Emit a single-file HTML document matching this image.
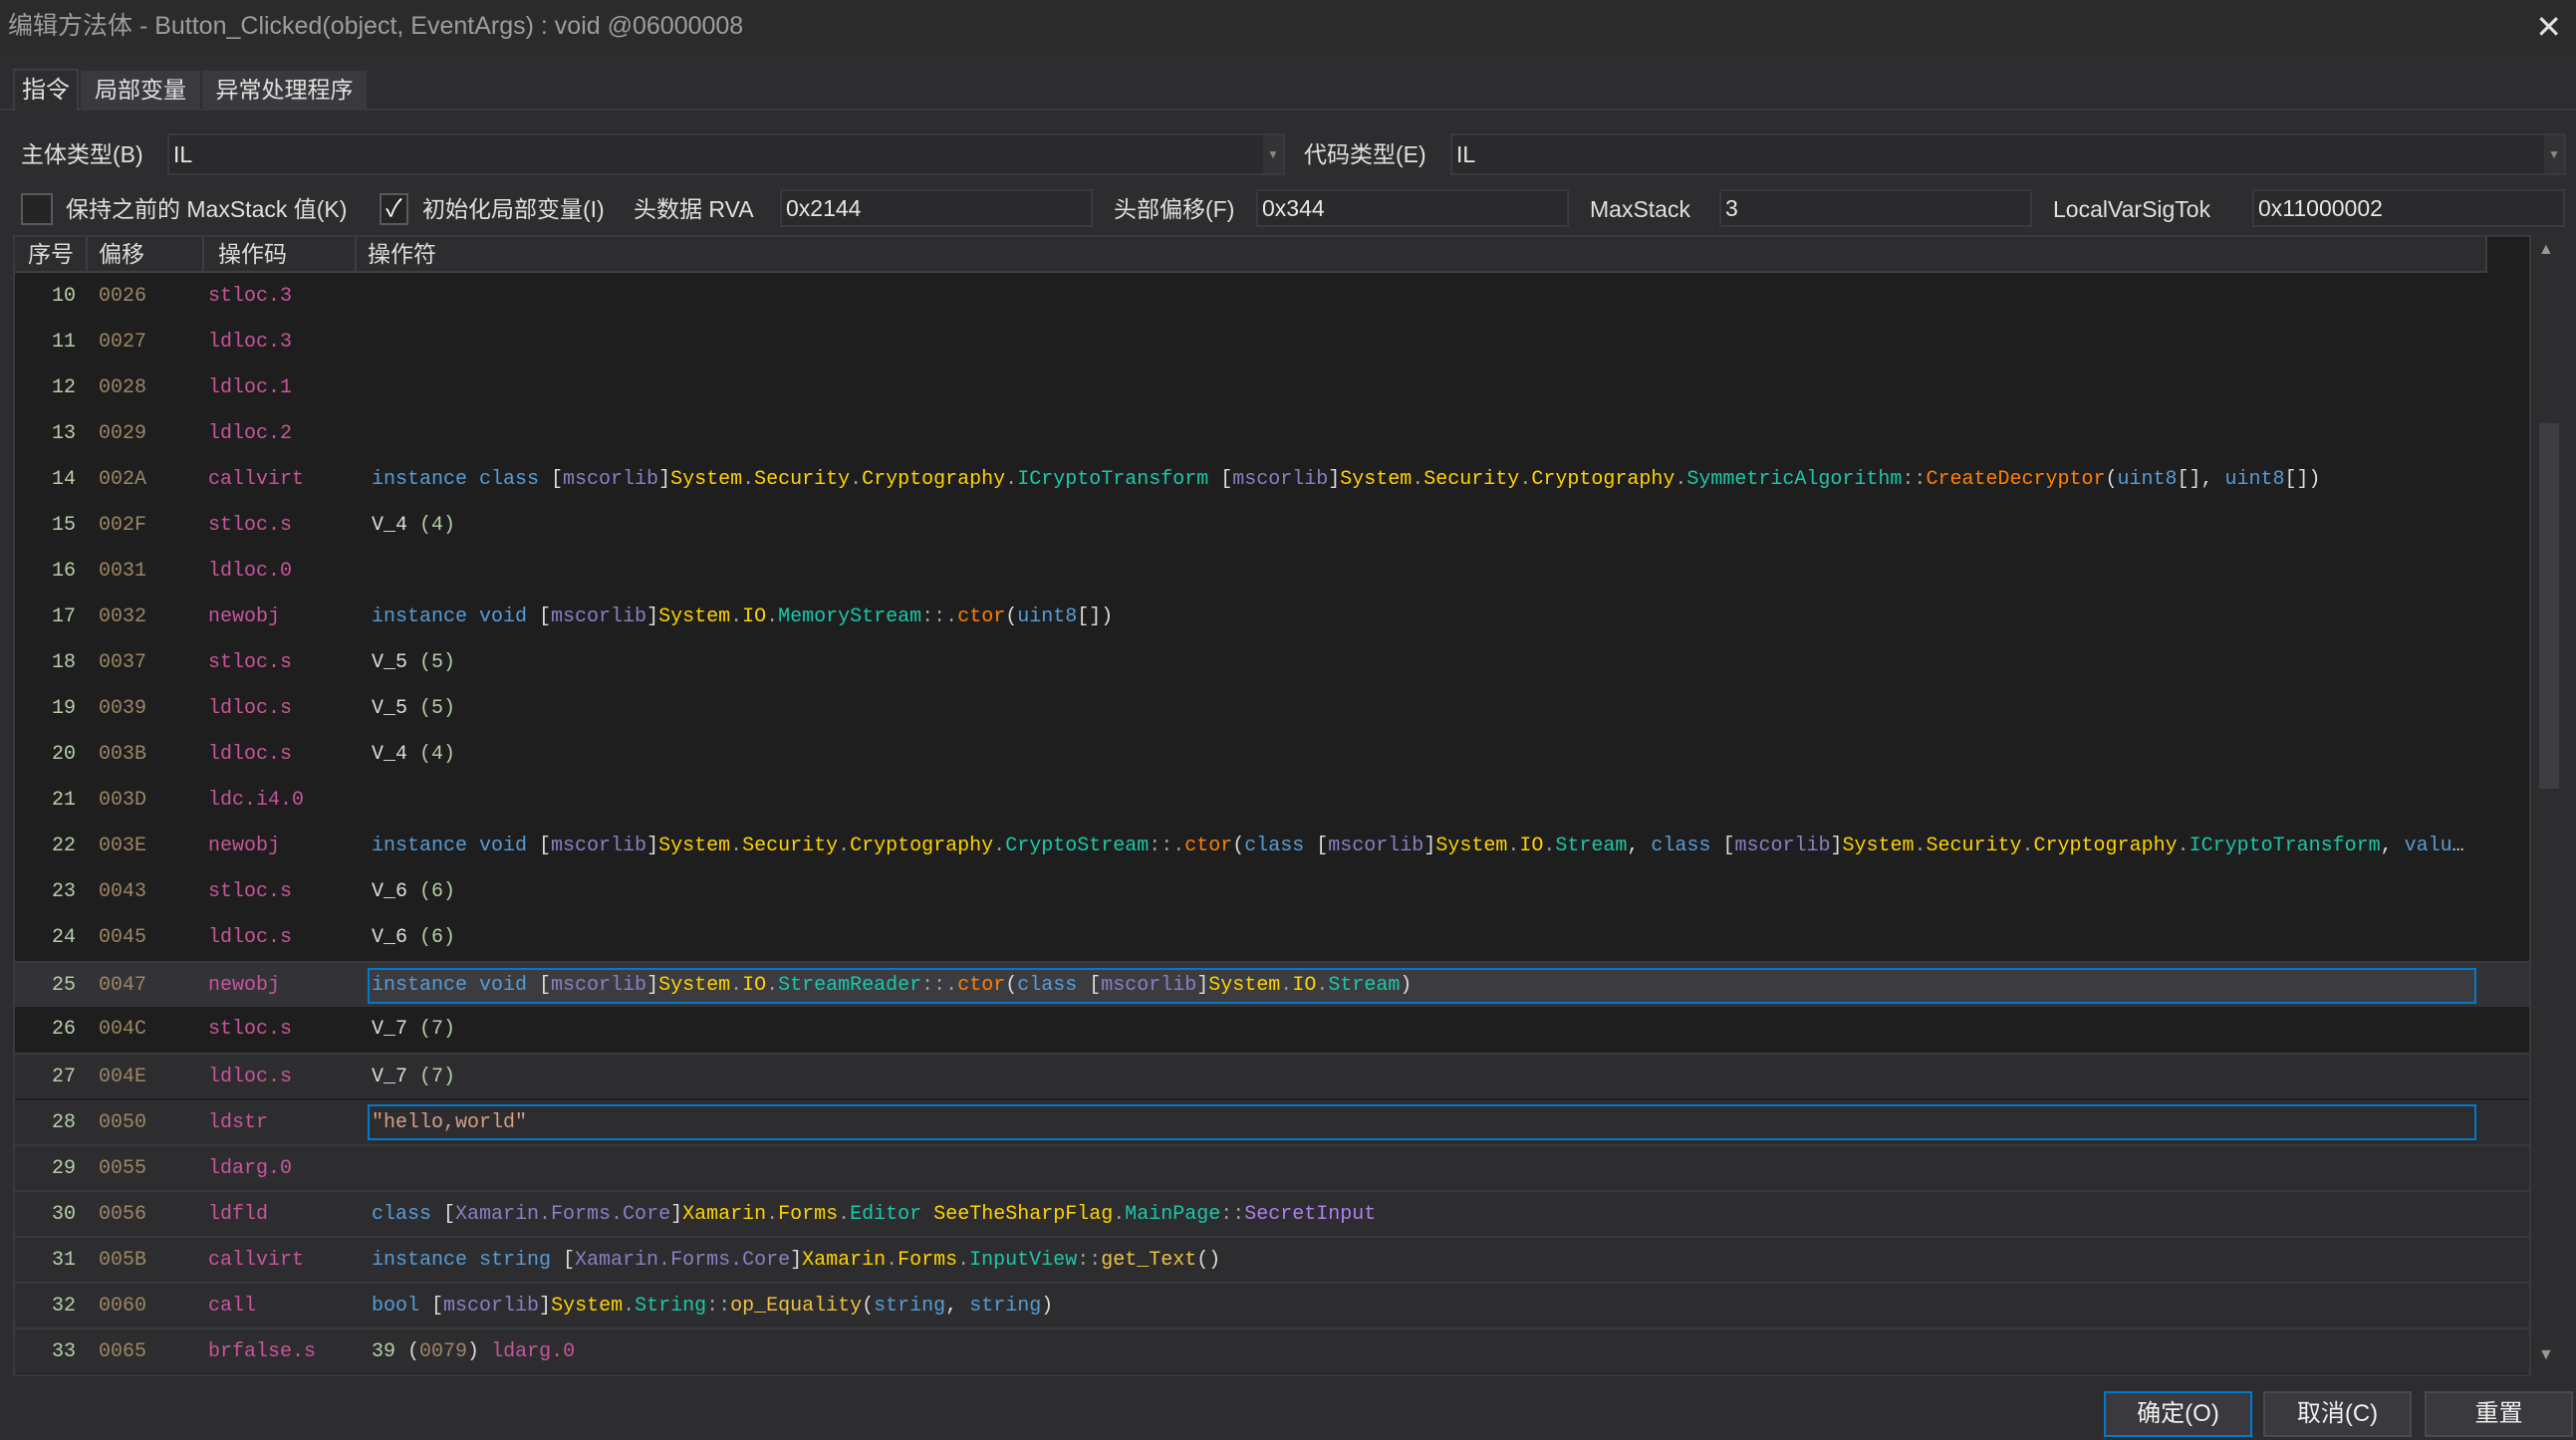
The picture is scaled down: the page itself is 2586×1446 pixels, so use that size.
<!DOCTYPE html>
<html><head><meta charset="utf-8"><style>
*{margin:0;padding:0;box-sizing:border-box}
body{width:2586px;height:1446px;background:#2d2d30;position:relative;overflow:hidden;font-family:"Liberation Sans","Noto Sans CJK SC",sans-serif;color:#dcdcdc}
.abs{position:absolute}
.title{left:0;top:0;width:2586px;height:56px;background:#2b2b2c;color:#9d9d9d;font-size:25px;line-height:52px;padding-left:8px}
.lbl{font-size:23px;color:#e0e0e0;line-height:40px;white-space:nowrap}
.inp{background:#2a2a2c;border:2px solid #3a3a3e;font-size:23px;color:#e6e6e6;line-height:34px;padding-left:4px}
.cb{border:2px solid #5a5a5e;background:#252526}
.grid{left:13px;top:236px;width:2528px;height:1146px;background:#1e1e1e;border:2px solid #3a3a3c}
.hdr{left:15px;top:238px;width:2482px;height:36px;background:#2d2d30;border-bottom:2px solid #3e3e42;font-size:23px;line-height:34px}
.row{position:absolute;left:15px;width:2524px;height:46px;font-family:"Liberation Mono",monospace;font-size:20px;line-height:46px;white-space:pre}
.alt{background:#2d2d30;border-top:2px solid #3a3a3c}
.c1{position:absolute;right:2463px;color:#b5cea8}
.c2{position:absolute;left:84px;color:#9c8662}
.c3{position:absolute;left:194px;color:#c8559a}
.c4{position:absolute;left:358px;color:#dcdcdc}
.k{color:#569cd6}.a{color:#8a7fc4}.n{color:#ffd200}.t{color:#1ac8a8}.m{color:#ff8000}.d{color:#9a9a9a}.g{color:#b5cea8}.o{color:#9c8662}.s{color:#d69d85}.f{color:#b07ff0}.c{color:#c8559a}.y{color:#f0c040}
.box{position:absolute;left:354px;top:0;width:2117px;height:36px;margin-top:5px;border:2px solid #007acc}
.btn{top:1397px;height:46px;background:#3a3a3e;border:2px solid #4a4a4e;font-size:24px;text-align:center;line-height:42px;color:#f0f0f0}
</style></head><body>
<div class="abs title">编辑方法体 - Button_Clicked(object, EventArgs) : void @06000008</div>
<div class="abs" style="right:14px;top:8px;font-size:32px;color:#e0e0e0">✕</div>
<div class="abs" style="left:0;top:109px;width:2586px;height:2px;background:#3a3a3e"></div>
<div class="abs lbl" style="left:13px;top:69px;width:66px;height:42px;background:#2d2d30;border:2px solid #3e3e42;border-bottom:none;text-align:center;font-size:24px">指令</div>
<div class="abs lbl" style="left:81px;top:71px;width:120px;height:38px;background:#3a3a3e;text-align:center;line-height:38px">局部变量</div>
<div class="abs lbl" style="left:203px;top:71px;width:165px;height:38px;background:#3a3a3e;text-align:center;line-height:38px">异常处理程序</div>

<div class="abs lbl" style="left:21px;top:135px">主体类型(B)</div>
<div class="abs inp" style="left:168px;top:134px;width:1122px;height:42px;line-height:38px">IL</div>
<div class="abs" style="left:1268px;top:136px;width:20px;height:38px;background:#333336;color:#888;font-size:12px;text-align:center;line-height:38px">▼</div>
<div class="abs lbl" style="left:1309px;top:135px">代码类型(E)</div>
<div class="abs inp" style="left:1456px;top:134px;width:1120px;height:42px;line-height:38px">IL</div>
<div class="abs" style="left:2554px;top:136px;width:20px;height:38px;background:#333336;color:#888;font-size:12px;text-align:center;line-height:38px">▼</div>

<div class="abs cb" style="left:21px;top:194px;width:32px;height:32px"></div>
<div class="abs lbl" style="left:66px;top:190px">保持之前的 MaxStack 值(K)</div>
<div class="abs cb" style="left:381px;top:194px;width:29px;height:32px;color:#fff;font-size:24px;text-align:center;line-height:28px">✓</div>
<div class="abs lbl" style="left:424px;top:190px">初始化局部变量(I)</div>
<div class="abs lbl" style="left:636px;top:190px">头数据 RVA</div>
<div class="abs inp" style="left:783px;top:190px;width:314px;height:38px">0x2144</div>
<div class="abs lbl" style="left:1118px;top:190px">头部偏移(F)</div>
<div class="abs inp" style="left:1261px;top:190px;width:314px;height:38px">0x344</div>
<div class="abs lbl" style="left:1596px;top:190px">MaxStack</div>
<div class="abs inp" style="left:1726px;top:190px;width:314px;height:38px">3</div>
<div class="abs lbl" style="left:2061px;top:190px">LocalVarSigTok</div>
<div class="abs inp" style="left:2261px;top:190px;width:314px;height:38px">0x11000002</div>

<div class="abs grid"></div>
<div class="abs hdr">
<span class="abs" style="left:13px">序号</span><span class="abs" style="left:84px">偏移</span><span class="abs" style="left:204px">操作码</span><span class="abs" style="left:354px">操作符</span>
<div class="abs" style="left:71px;top:0;width:2px;height:34px;background:#3e3e42"></div>
<div class="abs" style="left:188px;top:0;width:2px;height:34px;background:#3e3e42"></div>
<div class="abs" style="left:341px;top:0;width:2px;height:34px;background:#3e3e42"></div>
<div class="abs" style="left:2480px;top:0;width:2px;height:34px;background:#3e3e42"></div>
</div>
<div class="abs" style="left:2541px;top:238px;width:35px;height:1144px;background:#2d2d30"></div>
<div class="abs" style="left:2549px;top:425px;width:20px;height:367px;background:#3e3e42"></div>
<div class="abs" style="left:2548px;top:242px;color:#999;font-size:16px">▲</div>
<div class="abs" style="left:2548px;top:1352px;color:#999;font-size:16px">▼</div>

<div class="row" style="top:275px"><span class="c1">10</span><span class="c2">0026</span><span class="c3">stloc.3</span></div>
<div class="row" style="top:321px"><span class="c1">11</span><span class="c2">0027</span><span class="c3">ldloc.3</span></div>
<div class="row" style="top:367px"><span class="c1">12</span><span class="c2">0028</span><span class="c3">ldloc.1</span></div>
<div class="row" style="top:413px"><span class="c1">13</span><span class="c2">0029</span><span class="c3">ldloc.2</span></div>
<div class="row" style="top:459px"><span class="c1">14</span><span class="c2">002A</span><span class="c3">callvirt</span><span class="c4"><span class="k">instance class </span>[<span class="a">mscorlib</span>]<span class="n">System</span><span class="d">.</span><span class="n">Security</span><span class="d">.</span><span class="n">Cryptography</span><span class="d">.</span><span class="t">ICryptoTransform</span> [<span class="a">mscorlib</span>]<span class="n">System</span><span class="d">.</span><span class="n">Security</span><span class="d">.</span><span class="n">Cryptography</span><span class="d">.</span><span class="t">SymmetricAlgorithm</span><span class="d">::</span><span class="m">CreateDecryptor</span>(<span class="k">uint8</span>[], <span class="k">uint8</span>[])</span></div>
<div class="row" style="top:505px"><span class="c1">15</span><span class="c2">002F</span><span class="c3">stloc.s</span><span class="c4">V_4 <span class="g">(4)</span></span></div>
<div class="row" style="top:551px"><span class="c1">16</span><span class="c2">0031</span><span class="c3">ldloc.0</span></div>
<div class="row" style="top:597px"><span class="c1">17</span><span class="c2">0032</span><span class="c3">newobj</span><span class="c4"><span class="k">instance void </span>[<span class="a">mscorlib</span>]<span class="n">System</span><span class="d">.</span><span class="n">IO</span><span class="d">.</span><span class="t">MemoryStream</span><span class="d">::.</span><span class="m">ctor</span>(<span class="k">uint8</span>[])</span></div>
<div class="row" style="top:643px"><span class="c1">18</span><span class="c2">0037</span><span class="c3">stloc.s</span><span class="c4">V_5 <span class="g">(5)</span></span></div>
<div class="row" style="top:689px"><span class="c1">19</span><span class="c2">0039</span><span class="c3">ldloc.s</span><span class="c4">V_5 <span class="g">(5)</span></span></div>
<div class="row" style="top:735px"><span class="c1">20</span><span class="c2">003B</span><span class="c3">ldloc.s</span><span class="c4">V_4 <span class="g">(4)</span></span></div>
<div class="row" style="top:781px"><span class="c1">21</span><span class="c2">003D</span><span class="c3">ldc.i4.0</span></div>
<div class="row" style="top:827px"><span class="c1">22</span><span class="c2">003E</span><span class="c3">newobj</span><span class="c4"><span class="k">instance void </span>[<span class="a">mscorlib</span>]<span class="n">System</span><span class="d">.</span><span class="n">Security</span><span class="d">.</span><span class="n">Cryptography</span><span class="d">.</span><span class="t">CryptoStream</span><span class="d">::.</span><span class="m">ctor</span>(<span class="k">class </span>[<span class="a">mscorlib</span>]<span class="n">System</span><span class="d">.</span><span class="n">IO</span><span class="d">.</span><span class="t">Stream</span>, <span class="k">class </span>[<span class="a">mscorlib</span>]<span class="n">System</span><span class="d">.</span><span class="n">Security</span><span class="d">.</span><span class="n">Cryptography</span><span class="d">.</span><span class="t">ICryptoTransform</span>, <span class="k">valu</span>…</span></div>
<div class="row" style="top:873px"><span class="c1">23</span><span class="c2">0043</span><span class="c3">stloc.s</span><span class="c4">V_6 <span class="g">(6)</span></span></div>
<div class="row" style="top:919px"><span class="c1">24</span><span class="c2">0045</span><span class="c3">ldloc.s</span><span class="c4">V_6 <span class="g">(6)</span></span></div>
<div class="row alt" style="top:965px;background:#333337"><div class="box" style="background:#3c3c40"></div><span class="c1">25</span><span class="c2">0047</span><span class="c3">newobj</span><span class="c4" style="left:358px"><span class="k">instance void </span>[<span class="a">mscorlib</span>]<span class="n">System</span><span class="d">.</span><span class="n">IO</span><span class="d">.</span><span class="t">StreamReader</span><span class="d">::.</span><span class="m">ctor</span>(<span class="k">class </span>[<span class="a">mscorlib</span>]<span class="n">System</span><span class="d">.</span><span class="n">IO</span><span class="d">.</span><span class="t">Stream</span>)</span></div>
<div class="row" style="top:1011px"><span class="c1">26</span><span class="c2">004C</span><span class="c3">stloc.s</span><span class="c4">V_7 <span class="g">(7)</span></span></div>
<div class="row alt" style="top:1057px"><span class="c1">27</span><span class="c2">004E</span><span class="c3">ldloc.s</span><span class="c4">V_7 <span class="g">(7)</span></span></div>
<div class="row alt" style="top:1103px;border-top:2px solid #1e1e1e"><div class="box" style="margin-top:4px"></div><span class="c1">28</span><span class="c2">0050</span><span class="c3">ldstr</span><span class="c4 s">"hello,world"</span></div>
<div class="row alt" style="top:1149px"><span class="c1">29</span><span class="c2">0055</span><span class="c3">ldarg.0</span></div>
<div class="row alt" style="top:1195px"><span class="c1">30</span><span class="c2">0056</span><span class="c3">ldfld</span><span class="c4"><span class="k">class </span>[<span class="a">Xamarin.Forms.Core</span>]<span class="n">Xamarin</span><span class="d">.</span><span class="n">Forms</span><span class="d">.</span><span class="t">Editor</span> <span class="n">SeeTheSharpFlag</span><span class="d">.</span><span class="t">MainPage</span><span class="d">::</span><span class="f">SecretInput</span></span></div>
<div class="row alt" style="top:1241px"><span class="c1">31</span><span class="c2">005B</span><span class="c3">callvirt</span><span class="c4"><span class="k">instance string </span>[<span class="a">Xamarin.Forms.Core</span>]<span class="n">Xamarin</span><span class="d">.</span><span class="n">Forms</span><span class="d">.</span><span class="t">InputView</span><span class="d">::</span><span class="y">get_Text</span>()</span></div>
<div class="row alt" style="top:1287px"><span class="c1">32</span><span class="c2">0060</span><span class="c3">call</span><span class="c4"><span class="k">bool </span>[<span class="a">mscorlib</span>]<span class="n">System</span><span class="d">.</span><span class="t">String</span><span class="d">::</span><span class="y">op_Equality</span>(<span class="k">string</span>, <span class="k">string</span>)</span></div>
<div class="row alt" style="top:1333px;height:46px"><span class="c1">33</span><span class="c2">0065</span><span class="c3">brfalse.s</span><span class="c4"><span class="g">39</span> (<span class="o">0079</span>) <span class="c">ldarg.0</span></span></div>

<div class="abs btn" style="left:2112px;width:149px;border-color:#007acc">确定(O)</div>
<div class="abs btn" style="left:2272px;width:149px">取消(C)</div>
<div class="abs btn" style="left:2434px;width:149px">重置</div>
</body></html>
